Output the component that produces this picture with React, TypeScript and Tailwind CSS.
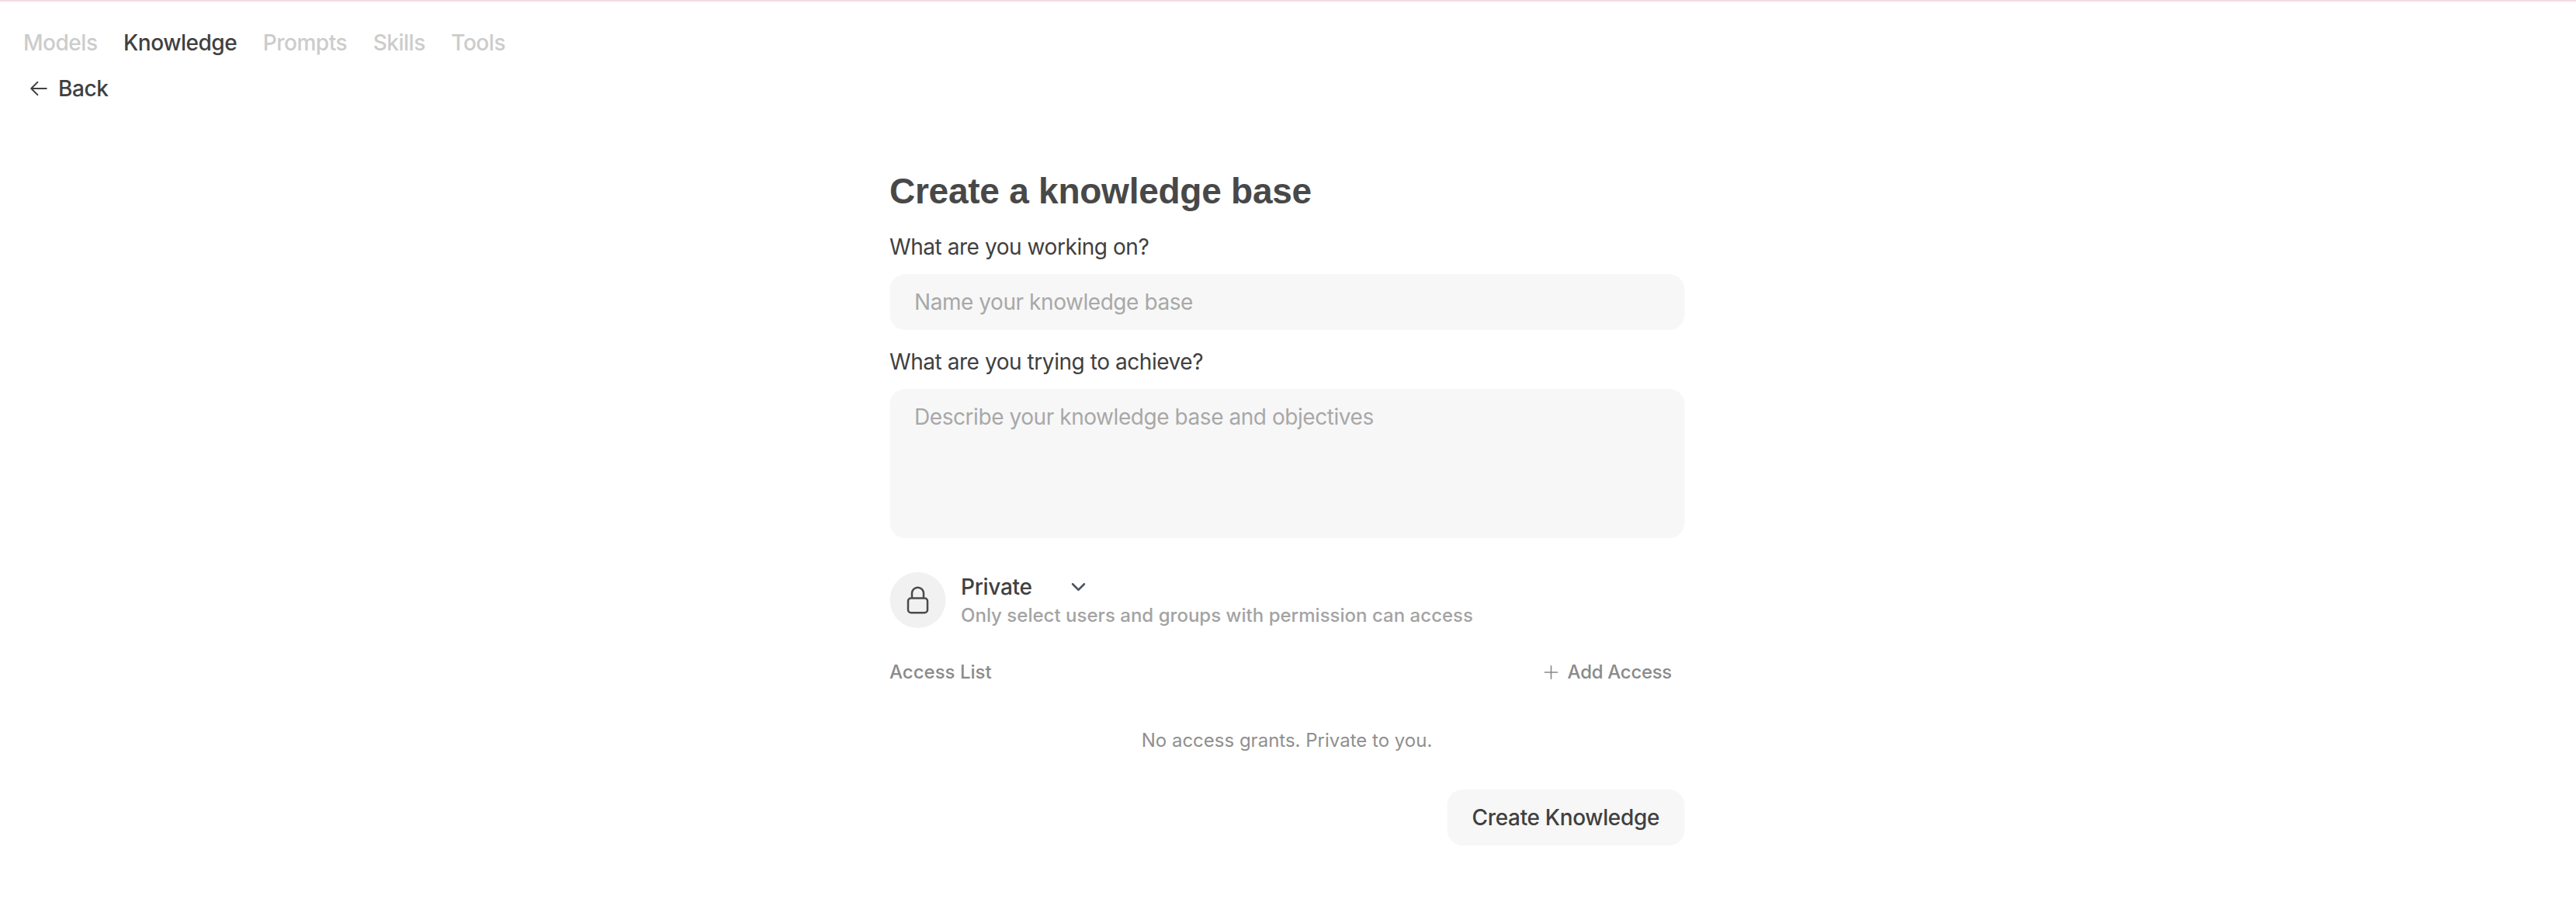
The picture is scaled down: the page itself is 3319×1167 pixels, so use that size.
import React from "react";

function Lock() {
  return (
    <svg viewBox="0 0 24 24" fill="none" stroke="currentColor" strokeWidth={1.5} className="w-[40px] h-[40px] text-[#4a4a4a]">
      <path strokeLinecap="round" strokeLinejoin="round" d="M16.5 10.5V6.75a4.5 4.5 0 1 0-9 0v3.75m-.75 11.25h10.5a2.25 2.25 0 0 0 2.25-2.25v-6.75a2.25 2.25 0 0 0-2.25-2.25H6.75a2.25 2.25 0 0 0-2.25 2.25v6.75a2.25 2.25 0 0 0 2.25 2.25Z" />
    </svg>
  );
}

export default function App() {
  const tabs = ["Models", "Knowledge", "Prompts", "Skills", "Tools"];
  return (
    <div className="h-[1167px] w-full bg-white border-t-2 border-[#f6d9df] font-['Inter',sans-serif] text-[#404040] overflow-hidden">
      <nav className="flex gap-[33.5px] pl-[30px] pt-[38px] h-[68px] items-center text-[28px] leading-[36px] font-medium tracking-[-0.47px]">
        {tabs.map((t) => (
          <span key={t} className={t === "Knowledge" ? "text-[#404040]" : "text-[#cccccc]"}>{t}</span>
        ))}
      </nav>
      <div className="flex items-center gap-[12px] pl-[37px] h-[44px] mt-[22px] text-[28px] leading-[40px] font-medium tracking-[-0.44px] text-[#404040]">
        <svg viewBox="0 0 24 24" fill="none" stroke="currentColor" strokeWidth={1.9} className="w-[26px] h-[26px] text-[#404040]">
          <path strokeLinecap="round" strokeLinejoin="round" d="M10.5 19.5 3 12m0 0 7.5-7.5M3 12h18" />
        </svg>
        <span>Back</span>
      </div>
      <main className="w-[1024px] mx-auto mt-[78px] flex flex-col translate-x-[-1.5px]">
        <h1 className="font-['Liberation_Sans',sans-serif] font-bold text-[46px] tracking-[-0.25px] leading-[64px] text-[#484848] h-[64px]">Create a knowledge base</h1>
        <label className="mt-[20px] h-[40px] text-[28px] leading-[40px] tracking-[-0.44px] text-[#404040]">What are you working on?</label>
        <input
          className="mt-[15px] h-[72px] rounded-[20px] bg-[#f7f7f7] px-[32px] text-[28px] tracking-[-0.44px] outline-none placeholder:text-[#a8a8a8]"
          placeholder="Name your knowledge base"
        />
        <label className="mt-[21px] h-[40px] text-[28px] leading-[40px] tracking-[-0.44px] text-[#404040]">What are you trying to achieve?</label>
        <textarea
          className="mt-[15px] h-[192px] rounded-[20px] bg-[#f7f7f7] px-[32px] py-[16px] text-[28px] leading-[40px] tracking-[-0.44px] resize-none outline-none placeholder:text-[#a8a8a8]"
          placeholder="Describe your knowledge base and objectives"
        />
        <div className="mt-[44px] flex items-center gap-[20px]">
          <div className="w-[72px] h-[72px] rounded-full bg-[#f1f1f1] flex items-center justify-center">
            <Lock />
          </div>
          <div className="flex flex-col">
            <div className="flex items-center h-[36px]">
              <span className="w-[139px] text-[28px] leading-[40px] font-medium tracking-[-0.3px] text-[#404040]">Private</span>
              <svg viewBox="0 0 24 24" fill="none" stroke="currentColor" strokeWidth={2.5} className="w-[24px] h-[24px] text-[#4b5563]">
                <path strokeLinecap="round" strokeLinejoin="round" d="m19.5 8.25-7.5 7.5-7.5-7.5" />
              </svg>
            </div>
            <span className="mt-[3px] text-[24px] leading-[32px] font-medium tracking-[0.02px] text-[#a3a3a3]">Only select users and groups with permission can access</span>
          </div>
        </div>
        <div className="mt-[37px] h-[40px] flex items-center justify-between text-[24px] font-medium text-[#8a8a8a]">
          <span>Access List</span>
          <span className="flex items-center gap-[8px] pr-[16px] tracking-[-0.3px]">
            <svg viewBox="0 0 24 24" fill="none" stroke="currentColor" strokeWidth={1.5} className="w-[26px] h-[26px]">
              <path strokeLinecap="round" strokeLinejoin="round" d="M12 4.5v15m7.5-7.5h-15" />
            </svg>
            Add Access
          </span>
        </div>
        <div className="mt-[48px] h-[40px] flex items-center justify-center text-[24px] text-[#8f8f8f] font-normal">No access grants. Private to you.</div>
        <div className="mt-[43px] flex justify-end">
          <button className="h-[72px] px-[32px] rounded-[20px] bg-[#f7f7f7] text-[28px] font-medium tracking-[-0.35px] text-[#404040]">Create Knowledge</button>
        </div>
      </main>
    </div>
  );
}
